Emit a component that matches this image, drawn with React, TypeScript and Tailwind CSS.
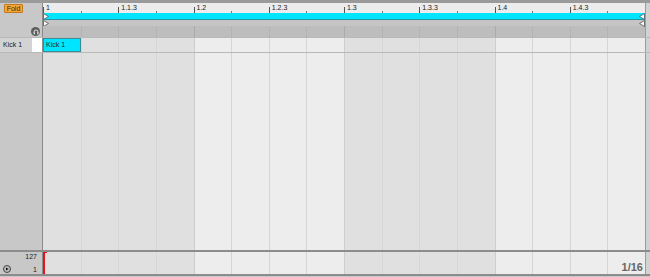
import type { ReactNode } from "react";

const labels = ["1", "1.1.3", "1.2", "1.2.3", "1.3", "1.3.3", "1.4", "1.4.3"];

type GridProps = {
  className: string;
  dark: string;
  light: string;
  line: string;
  barLine: string;
  first?: ReactNode;
};

function Grid({ className, dark, light, line, barLine, first }: GridProps) {
  return (
    <div className={`grid grid-cols-4 w-[602px] ${className}`}>
      {[0, 1, 2, 3].map((b) => (
        <div key={b} className={`grid grid-cols-4 ${b % 2 === 0 ? dark : light}`}>
          {[0, 1, 2, 3].map((c) => {
            const isFirst = b === 0 && c === 0;
            return (
              <div
                key={c}
                className={isFirst ? "" : `border-l ${c === 0 ? barLine : line}`}
              >
                {isFirst ? first : null}
              </div>
            );
          })}
        </div>
      ))}
    </div>
  );
}

function RightEdge() {
  return (
    <div className="flex shrink-0">
      <div className="w-px bg-[#9c9c9c]" />
      <div className="w-[4px] bg-[#d2d2d2]" />
    </div>
  );
}

function Marker({ flip }: { flip?: boolean }) {
  return (
    <svg width="6" height="7" viewBox="0 0 6 7" className={flip ? "rotate-180" : ""}>
      <path d="M0.5 0.5 L5.5 3.5 L0.5 6.5 Z" fill="#ffffff" stroke="#555" strokeWidth="0.8" />
    </svg>
  );
}

export default function App() {
  return (
    <div
      className="w-[650px] h-[277px] flex flex-col overflow-hidden bg-[#c8c8c8] text-[#222]"
      style={{ fontFamily: '"Liberation Sans", Arial, sans-serif' }}
    >
      <div className="h-[3px] bg-[#9a9a9a] shrink-0" />

      {/* header: ruler, loop brace, markers */}
      <div className="flex h-[34px] shrink-0">
        <div className="w-[42px] bg-[#c8c8c8] flex flex-col justify-between pl-[4px] pb-[1px] pt-[1px]">
          <div className="w-[19px] h-[9px] bg-[#f5a53a] border border-[#c47a1a] rounded-[1px] text-[7px] leading-[7px] text-[#4a2a00] text-center">
            Fold
          </div>
          <div className="self-end mr-[2px] w-[9px] h-[9px] rounded-full bg-[#5e5e5e] flex items-center justify-center">
            <svg width="6" height="6" viewBox="0 0 6 6">
              <path d="M1 4 V3 A2 2 0 0 1 5 3 V4" fill="none" stroke="#eee" strokeWidth="0.9" />
              <rect x="0.7" y="3.5" width="1.2" height="1.8" fill="#eee" />
              <rect x="4.1" y="3.5" width="1.2" height="1.8" fill="#eee" />
            </svg>
          </div>
        </div>
        <div className="w-px bg-[#8a8a8a]" />
        <div className="flex flex-col w-[602px]">
          <div className="h-[10px] bg-[#ececec] grid grid-cols-8">
            {labels.map((l) => (
              <div key={l} className="flex relative">
                <div className="flex items-start">
                  <div className="w-px h-[6px] mt-[4px] bg-[#555]" />
                  <span className="text-[7px] leading-[7px] ml-[2px] mt-[1px]">{l}</span>
                </div>
                <div className="absolute left-1/2 bottom-0 w-px h-[2px] bg-[#777]" />
              </div>
            ))}
          </div>
          <div className="h-[7px] bg-[#00e5ff] border-b border-[#2a95a8] flex justify-between items-center">
            <Marker />
            <Marker flip />
          </div>
          <div className="h-[6px] bg-[#c5c5c5] flex justify-between items-center">
            <Marker />
            <Marker flip />
          </div>
          <Grid
            className="h-[11px]"
            dark="bg-[#bdbdbd]"
            light="bg-[#bdbdbd]"
            line="border-[#b3b3b3]"
            barLine="border-[#aaaaaa]"
          />
        </div>
        <RightEdge />
      </div>

      {/* Kick row */}
      <div className="flex h-[16px] shrink-0 border-y border-[#b8b8b8]">
        <div className="w-[32px] bg-[#d3d3d3] text-[7px] leading-[14px] pl-[3px]">Kick 1</div>
        <div className="w-[10px] bg-white" />
        <div className="w-px bg-[#8a8a8a]" />
        <Grid
          className="h-full"
          dark="bg-[#e0e0e0]"
          light="bg-[#ededed]"
          line="border-[#d6d6d6]"
          barLine="border-[#cdcdcd]"
          first={
            <div className="h-full bg-[#00e5ff] border border-[#3a8c99] text-[7px] leading-[12px] pl-[2px] text-[#1a2a2a]">
              Kick 1
            </div>
          }
        />
        <RightEdge />
      </div>

      {/* note grid */}
      <div className="flex h-[197px] shrink-0">
        <div className="w-[42px] bg-[#c8c8c8]" />
        <div className="w-px bg-[#8a8a8a]" />
        <Grid
          className="h-full"
          dark="bg-[#e0e0e0]"
          light="bg-[#ededed]"
          line="border-[#d6d6d6]"
          barLine="border-[#cdcdcd]"
        />
        <RightEdge />
      </div>

      <div className="h-[2px] bg-[#8c8c8c] shrink-0" />

      {/* velocity lane */}
      <div className="flex h-[22px] shrink-0">
        <div className="w-[42px] bg-[#c8c8c8] flex items-stretch">
          <div className="flex items-end pl-[3px] pb-[1px]">
            <div className="w-[8px] h-[8px] rounded-full border border-[#444] bg-[#bbb] flex items-center justify-center">
              <svg width="4" height="4" viewBox="0 0 4 4">
                <path d="M1 0.5 L3.5 2 L1 3.5 Z" fill="#111" />
              </svg>
            </div>
          </div>
          <div className="flex-1 flex flex-col justify-between items-end text-[7px] leading-[7px] pt-[1px] pr-[5px] pb-[1px]">
            <span>127</span>
            <span>1</span>
          </div>
        </div>
        <div className="w-px bg-[#8a8a8a]" />
        <div className="relative">
          <Grid
            className="h-full"
            dark="bg-[#e0e0e0]"
            light="bg-[#ededed]"
            line="border-[#d6d6d6]"
            barLine="border-[#cdcdcd]"
          />
          <div className="absolute left-0 top-0 bottom-0 w-[2px] bg-[#e8141c]" />
          <div className="absolute left-[2px] top-0 w-[2px] h-px bg-[#e8141c]" />
          <div className="absolute right-[2px] bottom-[1px] text-[11px] leading-[11px] font-bold text-[#666]">
            1/16
          </div>
        </div>
        <RightEdge />
      </div>

      <div className="h-[2px] bg-[#8c8c8c] shrink-0" />
    </div>
  );
}
